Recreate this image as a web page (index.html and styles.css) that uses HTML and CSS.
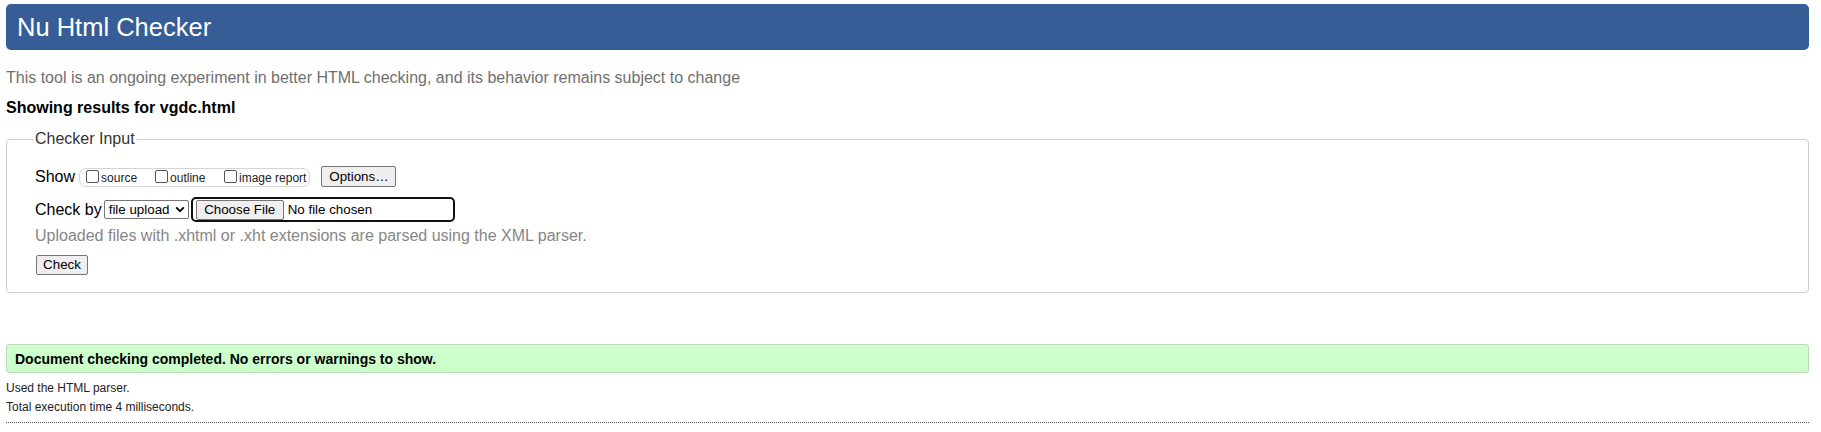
FILE: index.html
```html
<!DOCTYPE html>
<html lang="en">
<head>
<meta charset="utf-8">
<title>Nu Html Checker</title>
<link rel="stylesheet" href="styles.css">
</head>
<body>
<h1 class="title">Nu Html Checker</h1>
<p class="intro">This tool is an ongoing experiment in better HTML checking, and its behavior remains subject to change</p>
<p class="showing">Showing results for vgdc.html</p>
<fieldset class="input">
  <legend class="legend">Checker Input</legend>
  <div class="row row-show">
    <span class="label">Show</span>
    <span class="group">
      <label class="opt opt-fixed"><span class="cb"></span>source</label>
      <label class="opt opt-fixed"><span class="cb"></span>outline</label>
      <label class="opt"><span class="cb"></span>image report</label>
    </span>
    <span class="btn btn-options">Options…</span>
  </div>
  <div class="row row-check">
    <span class="label">Check by</span>
    <span class="select">file upload<svg class="chev" width="10" height="7" viewBox="0 0 10 7"><path d="M1.2 1.4 L5 5.2 L8.8 1.4" fill="none" stroke="#000" stroke-width="1.9"/></svg></span>
    <span class="file"><span class="btn btn-file">Choose File</span><span class="nofile">No file chosen</span></span>
  </div>
  <p class="hint">Uploaded files with .xhtml or .xht extensions are parsed using the XML parser.</p>
  <span class="btn btn-check">Check</span>
</fieldset>
<p class="success">Document checking completed. No errors or warnings to show.</p>
<p class="stats">Used the HTML parser.</p>
<p class="stats">Total execution time 4 milliseconds.</p>
<hr class="rule">
</body>
</html>
```

FILE: styles.css
```css
html, body {
  margin: 0;
  background: #fff;
}
body {
  padding: 4px 12px 0 6px;
  font-family: "Liberation Sans", Arial, sans-serif;
  color: #000;
}
.title {
  margin: 0;
  height: 46px;
  line-height: 46px;
  padding-left: 11px;
  background: #365d95;
  color: #fff;
  font-size: 25.5px;
  font-weight: normal;
  border-radius: 5px;
}
.intro {
  margin: 19px 0 0 0;
  font-size: 16px;
  color: #6f6f6f;
  line-height: 18.4px;
}
.showing {
  margin: 12px 0 0 0;
  font-size: 16px;
  font-weight: bold;
  line-height: 18.4px;
}
.input {
  margin: 12px 0 0 0;
  padding: 18px 10px 17px 28px;
  border: 1px solid #cfcfcf;
  border-radius: 4px;
  min-width: 0;
}
.legend {
  margin-left: -1px;
  padding: 0 1px;
  font-size: 16px;
  color: #333;
  line-height: 18.4px;
}
.row {
  display: flex;
  align-items: center;
}
.row-show {
  height: 21px;
}
.row-check {
  margin-top: 10px;
  height: 25px;
}
.label {
  font-size: 16px;
  line-height: 18.4px;
}
.row-show .label {
  margin-right: 4px;
}
.row-check .label {
  margin-right: 2px;
}
.group {
  display: flex;
  align-items: center;
  height: 17px;
  padding: 0 3px 0 6px;
  border: 1px solid #d4d4d4;
  border-radius: 7px;
  margin-top: 2px;
}
.opt {
  display: flex;
  align-items: flex-end;
  font-size: 12px;
  line-height: 14px;
  color: #222;
}
.opt-fixed {
  width: 69px;
}
.cb {
  display: inline-block;
  width: 11px;
  height: 11px;
  border: 1px solid #555;
  border-radius: 2px;
  margin-right: 2px;
  margin-bottom: 2px;
  background: #fff;
}
.btn {
  display: inline-flex;
  align-items: center;
  box-sizing: border-box;
  font-size: 13.33px;
  line-height: 15px;
  padding: 0 6px;
  border: 1px solid #767676;
  border-radius: 2px;
  background: #efefef;
  color: #000;
}
.btn-options {
  margin-left: 11px;
  height: 21px;
  width: 75px;
  justify-content: center;
}
.select {
  display: inline-flex;
  align-items: center;
  box-sizing: border-box;
  height: 19px;
  width: 85px;
  padding: 0 3px 0 4px;
  border: 1px solid #767676;
  border-radius: 2px;
  font-size: 13.33px;
  justify-content: space-between;
  background: #fff;
}
.chev {
  display: block;
}
.file {
  display: inline-flex;
  align-items: center;
  box-sizing: border-box;
  margin-left: 2px;
  width: 264px;
  height: 25px;
  padding: 0 3px;
  border: 2px solid #101010;
  border-radius: 5px;
}
.btn-file {
  height: 20px;
  width: 88px;
  justify-content: center;
}
.nofile {
  margin-left: 4px;
  font-size: 13.33px;
}
.hint {
  margin: 5px 0 0 0;
  font-size: 16px;
  line-height: 18.4px;
  color: #868686;
}
.btn-check {
  margin-top: 9px;
  margin-left: 1px;
  height: 20px;
  width: 52px;
  justify-content: center;
}
.success {
  margin: 51px 0 0 0;
  padding: 6px 8px 5px 8px;
  border: 1px solid #b7dab7;
  border-radius: 3px;
  background: #ccffcc;
  font-size: 14px;
  font-weight: bold;
  line-height: 16px;
  color: #000;
}
.stats {
  margin: 0;
  font-size: 12px;
  line-height: 19px;
  color: #222;
}
.success + .stats {
  margin-top: 6px;
}
.rule {
  margin: 5px 0 0 0;
  border: 0;
  border-top: 1px dotted #555;
  height: 0;
}
```
